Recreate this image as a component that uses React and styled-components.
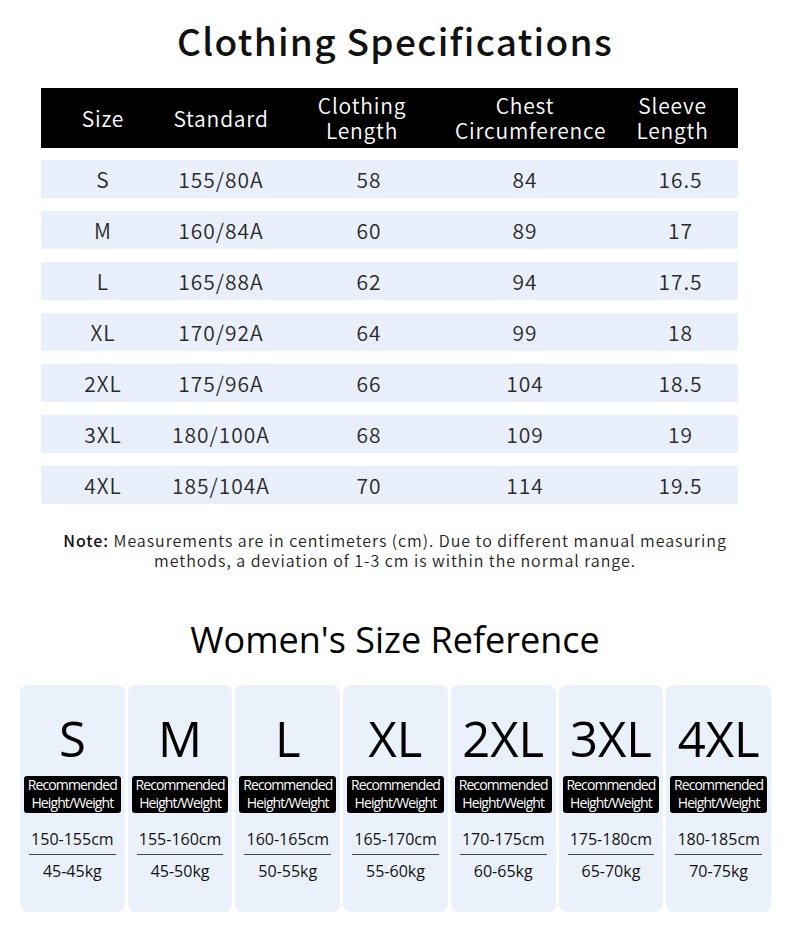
import React from 'react'
import styled, { createGlobalStyle } from 'styled-components'

const GlobalStyle = createGlobalStyle`
  html, body {
    margin: 0;
    padding: 0;
    background: #fff;
  }
  body {
    font-family: "Noto Sans CJK SC", "Noto Sans", sans-serif;
    color: #111;
  }
`;

const specs = [
  ['S', '155/80A', '58', '84', '16.5'],
  ['M', '160/84A', '60', '89', '17'],
  ['L', '165/88A', '62', '94', '17.5'],
  ['XL', '170/92A', '64', '99', '18'],
  ['2XL', '175/96A', '66', '104', '18.5'],
  ['3XL', '180/100A', '68', '109', '19'],
  ['4XL', '185/104A', '70', '114', '19.5'],
];

const women = [
  ['S', '150-155cm', '45-45kg'],
  ['M', '155-160cm', '45-50kg'],
  ['L', '160-165cm', '50-55kg'],
  ['XL', '165-170cm', '55-60kg'],
  ['2XL', '170-175cm', '60-65kg'],
  ['3XL', '175-180cm', '65-70kg'],
  ['4XL', '180-185cm', '70-75kg'],
];

export default function App() {
  return (
    <Page>
      <GlobalStyle />
      <Title>Clothing Specifications</Title>
      <Table>
        <HeadRow>
          <HeadCell>Size</HeadCell>
          <HeadCell>Standard</HeadCell>
          <HeadCell shift={-4}>Clothing<br />Length</HeadCell>
          <HeadCell>Chest<br />Circumference</HeadCell>
          <HeadCell shift={6}>Sleeve<br />Length</HeadCell>
        </HeadRow>
        {specs.map((r) => (
          <Row key={r[0]}>
            <Cell>{r[0]}</Cell>
            <Cell>{r[1]}</Cell>
            <Cell shift={3}>{r[2]}</Cell>
            <Cell>{r[3]}</Cell>
            <Cell shift={14}>{r[4]}</Cell>
          </Row>
        ))}
      </Table>
      <Note>
        <b>Note:</b> Measurements are in centimeters (cm). Due to different manual measuring<br />
        methods, a deviation of 1-3 cm is within the normal range.
      </Note>
      <SubTitle>Women's Size Reference</SubTitle>
      <Cards>
        {women.map((w) => (
          <Card key={w[0]}>
            <BigSize>{w[0]}</BigSize>
            <Badge>Recommended<br />Height/Weight</Badge>
            <Height>{w[1]}</Height>
            <Weight>{w[2]}</Weight>
          </Card>
        ))}
      </Cards>
    </Page>
  )
}

const Page = styled.div`
  width: 790px;
  height: 934px;
  overflow: hidden;
  padding-top: 14px;
  box-sizing: border-box;
`;

const Title = styled.h1`
  margin: 0;
  text-align: center;
  font-size: 37px;
  font-weight: 500;
  letter-spacing: 1.3px;
  line-height: 52px;
  color: #111;
`;

const Table = styled.div`
  margin: 22px 52px 0 41px;
  display: flex;
  flex-direction: column;
  gap: 13px;
`;

const cols = '124px 112px 178px 140px 143px';

const HeadRow = styled.div`
  display: grid;
  grid-template-columns: ${cols};
  align-items: center;
  height: 60px;
  background: #000;
  margin-bottom: -1px;
`;

const HeadCell = styled.div`
  color: #fff;
  text-align: center;
  font-size: 21px;
  font-weight: 350;
  line-height: 25px;
  letter-spacing: 0.8px;
  transform: translateX(${(p) => p.shift || 0}px);
`;

const Row = styled.div`
  display: grid;
  grid-template-columns: ${cols};
  align-items: center;
  height: 38px;
  background: #e9f0fb;
`;

const Cell = styled.div`
  text-align: center;
  font-size: 21px;
  font-weight: 350;
  color: #2a2a2a;
  letter-spacing: 1px;
  transform: translateX(${(p) => p.shift || 0}px);
`;

const Note = styled.p`
  margin: 26px 0 0;
  text-align: center;
  font-size: 16px;
  font-weight: 350;
  line-height: 20px;
  color: #222;
  letter-spacing: 0.95px;
  b {
    color: #111;
    font-weight: 500;
  }
`;

const SubTitle = styled.h2`
  margin: 45px 0 0;
  text-align: center;
  font-family: "Open Sans", "Noto Sans", sans-serif;
  font-size: 36px;
  font-weight: 400;
  line-height: 50px;
  color: #000;
`;

const Cards = styled.div`
  margin: 20px 19px 0 20px;
  display: grid;
  grid-template-columns: repeat(7, 1fr);
  gap: 3px;
`;

const Card = styled.div`
  height: 227px;
  background: #ebf1fa;
  border-radius: 8px;
  display: flex;
  flex-direction: column;
  align-items: center;
  padding: 0 4px;
`;

const BigSize = styled.div`
  margin-top: 20px;
  font-family: "Open Sans", "Noto Sans", sans-serif;
  font-size: 49px;
  line-height: 66px;
  color: #000;
`;

const Badge = styled.div`
  margin-top: 5px;
  align-self: stretch;
  background: #000;
  border-radius: 3px;
  color: #fff;
  text-align: center;
  font-family: "Open Sans", sans-serif;
  font-size: 14px;
  line-height: 18px;
  letter-spacing: -0.9px;
  padding: 0 0 1px;
`;

const Height = styled.div`
  margin-top: 14px;
  align-self: stretch;
  margin-left: 5px;
  margin-right: 5px;
  text-align: center;
  font-family: "Open Sans", sans-serif;
  font-size: 16px;
  line-height: 24px;
  color: #111;
  padding-bottom: 3px;
  border-bottom: 1px solid #444;
`;

const Weight = styled.div`
  margin-top: 5px;
  font-family: "Open Sans", sans-serif;
  font-size: 16px;
  line-height: 22px;
  color: #111;
`;
